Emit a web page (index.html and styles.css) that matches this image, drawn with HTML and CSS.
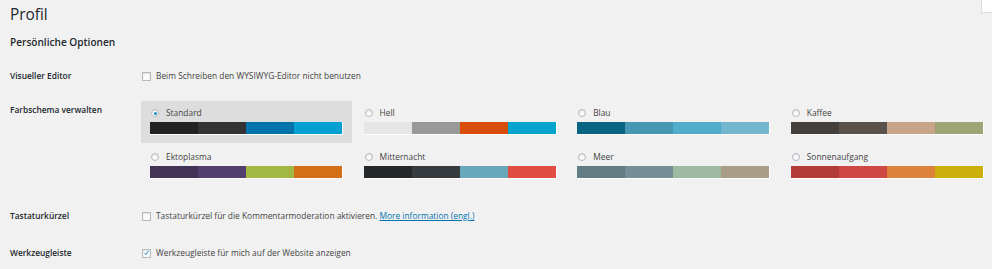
FILE: index.html
```html
<!DOCTYPE html>
<html lang="de">
<head>
<meta charset="utf-8">
<title>Profil</title>
<link rel="stylesheet" href="styles.css">
</head>
<body>
<div class="screen-tab"></div>
<div class="wrap">
  <h1 class="title">Profil</h1>
  <h2 class="section">Persönliche Optionen</h2>

  <div class="form-row row-editor">
    <div class="th">Visueller Editor</div>
    <div class="td"><label class="check"><span class="box"></span>Beim Schreiben den WYSIWYG-Editor nicht benutzen</label></div>
  </div>

  <div class="form-row row-scheme">
    <div class="th th-scheme">Farbschema verwalten</div>
    <div class="td">
      <div class="schemes">
        <div class="scheme selected">
          <div class="scheme-label"><span class="radio checked"></span>Standard</div>
          <div class="palette"><span style="background:#222"></span><span style="background:#333"></span><span style="background:#0073aa"></span><span style="background:#00a0d2"></span></div>
        </div>
        <div class="scheme">
          <div class="scheme-label"><span class="radio"></span>Hell</div>
          <div class="palette"><span style="background:#e5e5e5"></span><span style="background:#999"></span><span style="background:#d64e07"></span><span style="background:#04a4cc"></span></div>
        </div>
        <div class="scheme">
          <div class="scheme-label"><span class="radio"></span>Blau</div>
          <div class="palette"><span style="background:#096484"></span><span style="background:#4796b3"></span><span style="background:#52accc"></span><span style="background:#74b6ce"></span></div>
        </div>
        <div class="scheme">
          <div class="scheme-label"><span class="radio"></span>Kaffee</div>
          <div class="palette"><span style="background:#46403c"></span><span style="background:#59524c"></span><span style="background:#c7a589"></span><span style="background:#9ea476"></span></div>
        </div>
        <div class="scheme">
          <div class="scheme-label"><span class="radio"></span>Ektoplasma</div>
          <div class="palette"><span style="background:#413256"></span><span style="background:#523f6d"></span><span style="background:#a3b745"></span><span style="background:#d46f15"></span></div>
        </div>
        <div class="scheme">
          <div class="scheme-label"><span class="radio"></span>Mitternacht</div>
          <div class="palette"><span style="background:#25282b"></span><span style="background:#363b3f"></span><span style="background:#69a8bb"></span><span style="background:#e14d43"></span></div>
        </div>
        <div class="scheme">
          <div class="scheme-label"><span class="radio"></span>Meer</div>
          <div class="palette"><span style="background:#627c83"></span><span style="background:#738e96"></span><span style="background:#9ebaa0"></span><span style="background:#aa9d88"></span></div>
        </div>
        <div class="scheme">
          <div class="scheme-label"><span class="radio"></span>Sonnenaufgang</div>
          <div class="palette"><span style="background:#b43c38"></span><span style="background:#cf4944"></span><span style="background:#dd823b"></span><span style="background:#ccaf0b"></span></div>
        </div>
      </div>
    </div>
  </div>

  <div class="form-row row-keys">
    <div class="th">Tastaturkürzel</div>
    <div class="td"><label class="check"><span class="box"></span>Tastaturkürzel für die Kommentarmoderation aktivieren.&nbsp;<a href="#" class="more">More information (engl.)</a></label></div>
  </div>

  <div class="form-row row-toolbar">
    <div class="th">Werkzeugleiste</div>
    <div class="td"><label class="check"><span class="box checked">
      <svg viewBox="0 0 8 8" width="8" height="8"><path d="M1.8 4.2 L3.3 5.9 L6.3 1.6" fill="none" stroke="#1e8cbe" stroke-width="1.1"/></svg>
    </span>Werkzeugleiste für mich auf der Website anzeigen</label></div>
  </div>
</div>
</body>
</html>
```

FILE: styles.css
```css
html, body {
  margin: 0;
  padding: 0;
  background: #f1f1f1;
}

body {
  font-family: "Open Sans", "Liberation Sans", sans-serif;
  color: #444;
  font-size: 8.4px;
  position: relative;
  overflow: hidden;
}

.screen-tab {
  position: absolute;
  top: 0;
  right: 0;
  width: 10px;
  height: 12px;
  background: #fff;
  border-left: 1px solid #ddd;
  border-bottom: 1px solid #ddd;
}

.wrap {
  padding: 0 0 0 10px;
}

.title {
  margin: 0;
  padding-top: 4px;
  font-size: 15.4px;
  font-weight: 400;
  line-height: 21px;
  color: #23282d;
}

.section {
  margin: 10px 0 0;
  font-size: 10.1px;
  font-weight: 600;
  line-height: 15px;
  color: #23282d;
}

.form-row {
  display: grid;
  grid-template-columns: 131px 1fr;
  align-items: center;
}

.th {
  font-weight: 600;
  color: #23282d;
  font-size: 8.4px;
  line-height: 12px;
}

.row-editor {
  margin-top: 20px;
}

.row-scheme {
  margin-top: 19px;
  align-items: start;
}

.th-scheme {
  padding-top: 3px;
}

.row-keys {
  margin-top: 23.5px;
}

.row-toolbar {
  margin-top: 25px;
}

.check {
  display: flex;
  align-items: center;
  color: #444;
  line-height: 12px;
}

.box {
  display: inline-flex;
  align-items: center;
  justify-content: center;
  width: 7px;
  height: 7px;
  border: 1px solid #b4b9be;
  background: #fbfbfb;
  box-shadow: inset 0 1px 2px rgba(0, 0, 0, 0.1);
  margin: 0 5px 0 1px;
}

.box svg {
  display: block;
}

.more {
  color: #0073aa;
  text-decoration: underline;
}

.schemes {
  display: grid;
  grid-template-columns: repeat(4, 211px);
  column-gap: 2.6px;
  row-gap: 2.5px;
}

.scheme {
  padding: 5px 9px 7.5px;
}

.scheme.selected {
  background: #ddd;
}

.scheme-label {
  display: flex;
  align-items: center;
  line-height: 14px;
  margin-bottom: 2px;
  color: #444;
}

.radio {
  width: 6px;
  height: 6px;
  border-radius: 50%;
  border: 1px solid #b4b9be;
  background: #fbfbfb;
  box-shadow: inset 0 1px 2px rgba(0, 0, 0, 0.1);
  margin: 0 7px 0 1px;
  position: relative;
}

.radio.checked::after {
  content: "";
  position: absolute;
  left: 1.5px;
  top: 1.5px;
  width: 3px;
  height: 3px;
  border-radius: 50%;
  background: #1e8cbe;
}

.palette {
  display: flex;
  height: 12px;
  border-right: 1px solid #fff;
  border-bottom: 1px solid #fff;
}

.palette span {
  flex: 1;
}
```
